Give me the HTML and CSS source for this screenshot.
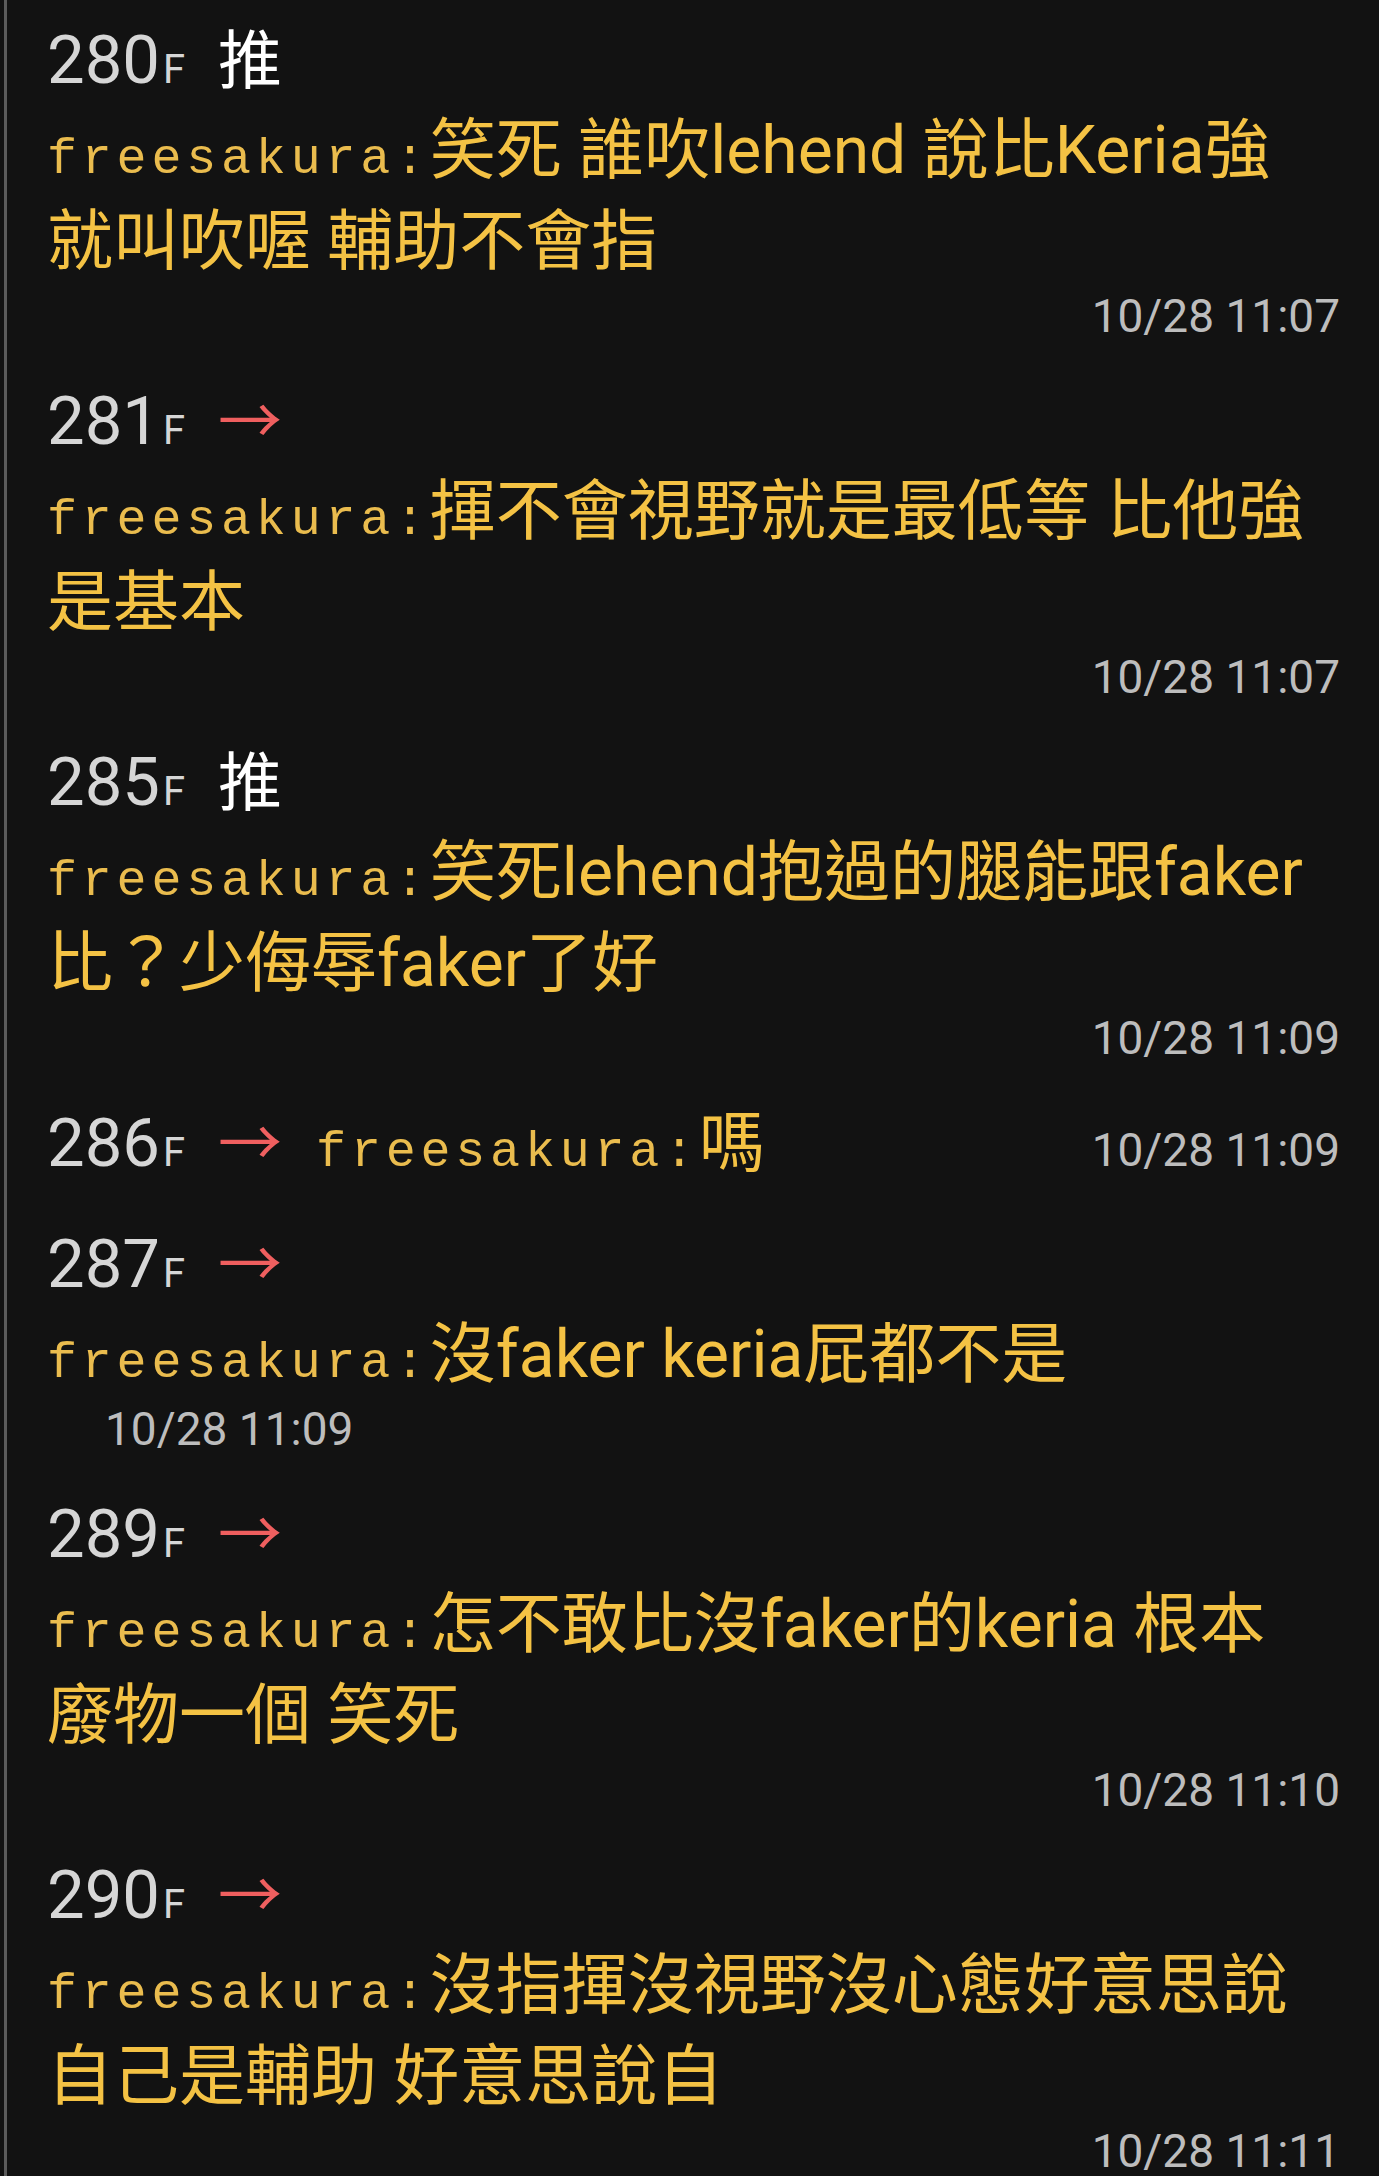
FILE: index.html
```html
<!DOCTYPE html>
<html lang="zh-Hant">
<head>
<meta charset="utf-8">
<title>推文</title>
<link rel="stylesheet" href="styles.css">
</head>
<body>
<main class="thread">
  <section class="push">
    <div class="head"><span class="floor">280<span class="f">F</span></span><span class="tag tag-up">推</span></div>
    <p class="content"><span class="uid">freesakura:</span>笑死 誰吹lehend 說比Keria強<br>就叫吹喔 輔助不會指</p>
    <div class="time">10/28 11:07</div>
  </section>
  <section class="push">
    <div class="head"><span class="floor">281<span class="f">F</span></span><span class="tag tag-arrow">→</span></div>
    <p class="content"><span class="uid">freesakura:</span>揮不會視野就是最低等 比他強<br>是基本</p>
    <div class="time">10/28 11:07</div>
  </section>
  <section class="push">
    <div class="head"><span class="floor">285<span class="f">F</span></span><span class="tag tag-up">推</span></div>
    <p class="content"><span class="uid">freesakura:</span>笑死lehend抱過的腿能跟faker<br>比？少侮辱faker了好</p>
    <div class="time">10/28 11:09</div>
  </section>
  <section class="push">
    <div class="head row"><span class="floor">286<span class="f">F</span></span><span class="tag tag-arrow">→</span><span class="inline-content"><span class="uid">freesakura:</span>嗎</span><span class="time-inline">10/28 11:09</span></div>
  </section>
  <section class="push">
    <div class="head"><span class="floor">287<span class="f">F</span></span><span class="tag tag-arrow">→</span></div>
    <p class="content"><span class="uid">freesakura:</span>沒faker keria屁都不是</p>
    <div class="time time-left">10/28 11:09</div>
  </section>
  <section class="push">
    <div class="head"><span class="floor">289<span class="f">F</span></span><span class="tag tag-arrow">→</span></div>
    <p class="content"><span class="uid">freesakura:</span>怎不敢比沒faker的keria 根本<br>廢物一個 笑死</p>
    <div class="time">10/28 11:10</div>
  </section>
  <section class="push">
    <div class="head"><span class="floor">290<span class="f">F</span></span><span class="tag tag-arrow">→</span></div>
    <p class="content"><span class="uid">freesakura:</span>沒指揮沒視野沒心態好意思說<br>自己是輔助 好意思說自</p>
    <div class="time">10/28 11:11</div>
  </section>
</main>
</body>
</html>
```

FILE: styles.css
```css
html, body {
  margin: 0;
  padding: 0;
  background: #121212;
}

.thread {
  margin-left: 4px;
  border-left: 3px solid #5b5b5b;
  padding: 15px 39px 0 40px;
  min-height: 2176px;
  box-sizing: border-box;
  font-family: Roboto, "Noto Sans CJK TC", sans-serif;
}

.push {
  margin-bottom: 31px;
}

.head {
  height: 90px;
  line-height: 90px;
  white-space: nowrap;
  font-size: 66px;
}

.floor {
  color: #d6d6d6;
  font-family: Roboto, sans-serif;
  font-size: 67px;
}

.f {
  font-size: 40px;
  line-height: 1;
  margin-left: 3px;
}

.tag {
  font-family: "Noto Sans CJK TC", sans-serif;
  font-size: 64px;
  line-height: 1;
  margin-left: 33px;
}

.tag-up {
  color: #ffffff;
}

.tag-arrow {
  color: #ef5f5f;
}

.content {
  margin: 0 -30px 0 0;
  font-size: 66px;
  line-height: 91px;
  color: #f4c244;
  white-space: nowrap;
}

.uid {
  font-family: "Liberation Mono", "DejaVu Sans Mono", monospace;
  font-size: 50px;
  letter-spacing: 4.8px;
  line-height: 1;
  color: #eabc4e;
}

.time {
  font-family: Roboto, sans-serif;
  font-size: 46px;
  line-height: 58px;
  height: 58px;
  color: #bdbdbd;
  text-align: right;
}

.time-left {
  text-align: left;
  padding-left: 58px;
}

.row {
  display: flex;
  align-items: baseline;
}

.inline-content {
  margin-left: 34px;
  color: #f4c244;
  font-size: 66px;
  line-height: 1;
}

.time-inline {
  margin-left: auto;
  font-family: Roboto, sans-serif;
  font-size: 46px;
  line-height: 1;
  color: #bdbdbd;
}
```
